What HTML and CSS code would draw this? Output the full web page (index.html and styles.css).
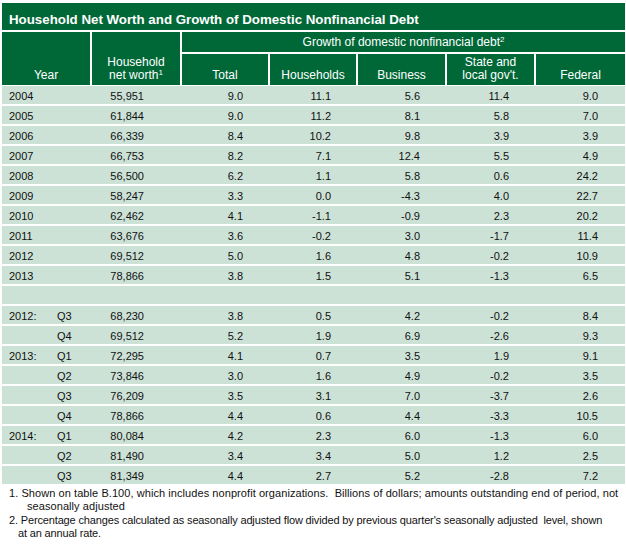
FILE: index.html
```html
<!DOCTYPE html>
<html>
<head>
<meta charset="utf-8">
<link rel="stylesheet" href="styles.css">
</head>
<body>
<div class="wrap">
  <div class="title">Household Net Worth and Growth of Domestic Nonfinancial Debt</div>
  <table class="tbl">
    <colgroup>
      <col class="c1"><col class="c2"><col class="c3"><col class="c4"><col class="c5"><col class="c6"><col class="c7">
    </colgroup>
    <thead>
      <tr class="h1">
        <th rowspan="2" class="hyear">Year</th>
        <th rowspan="2" class="hsep">Household<br>net worth<sup>1</sup></th>
        <th colspan="5" class="hsep hgrp">Growth of domestic nonfinancial debt<sup>2</sup></th>
      </tr>
      <tr class="h2">
        <th class="hsep">Total</th>
        <th class="hsep">Households</th>
        <th class="hsep">Business</th>
        <th class="hsep">State and<br>local gov't.</th>
        <th class="hsep">Federal</th>
      </tr>
    </thead>
    <tbody>
      <tr class="first"><td class="yr"><span class="y">2004</span></td><td class="nw">55,951</td><td>9.0</td><td>11.1</td><td>5.6</td><td>11.4</td><td class="fd">9.0</td></tr>
      <tr><td class="yr"><span class="y">2005</span></td><td class="nw">61,844</td><td>9.0</td><td>11.2</td><td>8.1</td><td>5.8</td><td class="fd">7.0</td></tr>
      <tr><td class="yr"><span class="y">2006</span></td><td class="nw">66,339</td><td>8.4</td><td>10.2</td><td>9.8</td><td>3.9</td><td class="fd">3.9</td></tr>
      <tr><td class="yr"><span class="y">2007</span></td><td class="nw">66,753</td><td>8.2</td><td>7.1</td><td>12.4</td><td>5.5</td><td class="fd">4.9</td></tr>
      <tr><td class="yr"><span class="y">2008</span></td><td class="nw">56,500</td><td>6.2</td><td>1.1</td><td>5.8</td><td>0.6</td><td class="fd">24.2</td></tr>
      <tr><td class="yr"><span class="y">2009</span></td><td class="nw">58,247</td><td>3.3</td><td>0.0</td><td>-4.3</td><td>4.0</td><td class="fd">22.7</td></tr>
      <tr><td class="yr"><span class="y">2010</span></td><td class="nw">62,462</td><td>4.1</td><td>-1.1</td><td>-0.9</td><td>2.3</td><td class="fd">20.2</td></tr>
      <tr><td class="yr"><span class="y">2011</span></td><td class="nw">63,676</td><td>3.6</td><td>-0.2</td><td>3.0</td><td>-1.7</td><td class="fd">11.4</td></tr>
      <tr><td class="yr"><span class="y">2012</span></td><td class="nw">69,512</td><td>5.0</td><td>1.6</td><td>4.8</td><td>-0.2</td><td class="fd">10.9</td></tr>
      <tr><td class="yr"><span class="y">2013</span></td><td class="nw">78,866</td><td>3.8</td><td>1.5</td><td>5.1</td><td>-1.3</td><td class="fd">6.5</td></tr>
      <tr class="blank"><td class="yr"></td><td class="nw"></td><td></td><td></td><td></td><td></td><td class="fd"></td></tr>
      <tr><td class="yr"><span class="y">2012:</span>Q3</td><td class="nw">68,230</td><td>3.8</td><td>0.5</td><td>4.2</td><td>-0.2</td><td class="fd">8.4</td></tr>
      <tr><td class="yr"><span class="y"></span>Q4</td><td class="nw">69,512</td><td>5.2</td><td>1.9</td><td>6.9</td><td>-2.6</td><td class="fd">9.3</td></tr>
      <tr><td class="yr"><span class="y">2013:</span>Q1</td><td class="nw">72,295</td><td>4.1</td><td>0.7</td><td>3.5</td><td>1.9</td><td class="fd">9.1</td></tr>
      <tr><td class="yr"><span class="y"></span>Q2</td><td class="nw">73,846</td><td>3.0</td><td>1.6</td><td>4.9</td><td>-0.2</td><td class="fd">3.5</td></tr>
      <tr><td class="yr"><span class="y"></span>Q3</td><td class="nw">76,209</td><td>3.5</td><td>3.1</td><td>7.0</td><td>-3.7</td><td class="fd">2.6</td></tr>
      <tr><td class="yr"><span class="y"></span>Q4</td><td class="nw">78,866</td><td>4.4</td><td>0.6</td><td>4.4</td><td>-3.3</td><td class="fd">10.5</td></tr>
      <tr><td class="yr"><span class="y">2014:</span>Q1</td><td class="nw">80,084</td><td>4.2</td><td>2.3</td><td>6.0</td><td>-1.3</td><td class="fd">6.0</td></tr>
      <tr><td class="yr"><span class="y"></span>Q2</td><td class="nw">81,490</td><td>3.4</td><td>3.4</td><td>5.0</td><td>1.2</td><td class="fd">2.5</td></tr>
      <tr><td class="yr"><span class="y"></span>Q3</td><td class="nw">81,349</td><td>4.4</td><td>2.7</td><td>5.2</td><td>-2.8</td><td class="fd">7.2</td></tr>
    </tbody>
  </table>
  <div class="notes">
    <p class="fn fn1">1. Shown on table B.100, which includes nonprofit organizations.&nbsp; Billions of dollars; amounts outstanding end of period, not<br>seasonally adjusted</p>
    <p class="fn fn2">2. Percentage changes calculated as seasonally adjusted flow divided by previous quarter's seasonally adjusted&nbsp; level, shown<br>at an annual rate.</p>
  </div>
</div>
</body>
</html>
```
FILE: styles.css
```css
html, body {
  margin: 0;
  padding: 0;
  background: #ffffff;
}

body {
  font-family: "Liberation Sans", Arial, sans-serif;
  color: #111111;
}

.wrap {
  padding: 3px 0 0 2px;
  width: 623px;
}

.title {
  box-sizing: border-box;
  height: 27px;
  padding: 9px 0 0 7px;
  line-height: 16px;
  font-size: 13.3px;
  font-weight: bold;
  color: #ffffff;
  background: #006837;
}

.tbl {
  margin-top: 2px;
  width: 623px;
  table-layout: fixed;
  border-collapse: separate;
  border-spacing: 0;
}

.c1 { width: 88px; }
.c2 { width: 90px; }
.c3 { width: 88px; }
.c4 { width: 88px; }
.c5 { width: 89px; }
.c6 { width: 89px; }
.c7 { width: 91px; }

.tbl th {
  background: #006837;
  color: #ffffff;
  font-weight: normal;
  font-size: 12px;
  line-height: 13px;
  text-align: center;
  vertical-align: bottom;
  padding: 0 0 3px 0;
}

.tbl th.hsep {
  border-left: 2px solid #ffffff;
}

.h1 th {
  height: 20px;
}

.tbl th.hgrp {
  height: 20px;
  padding: 0;
  line-height: 20px;
  vertical-align: middle;
  border-bottom: 2px solid #ffffff;
}

.h2 th {
  height: 28px;
}

.tbl sup {
  font-size: 8px;
  line-height: 0;
  vertical-align: 4px;
}

.tbl td {
  background: #cde2d7;
  font-size: 11px;
  height: 16px;
  line-height: 16px;
  padding: 2px 25px 0 0;
  text-align: right;
  border-top: 2px solid #ffffff;
  white-space: nowrap;
}

.tbl tr.first td {
  border-top-width: 1px;
}

.tbl td.yr {
  text-align: left;
  padding-left: 7px;
  padding-right: 0;
}

.y {
  display: inline-block;
  width: 48px;
}

.tbl td.nw {
  padding-right: 36px;
}

.tbl td.fd {
  padding-right: 27px;
}

.notes {
  padding-top: 3px;
}

.fn {
  margin: 0;
  font-size: 11px;
  line-height: 13px;
  white-space: nowrap;
}

.fn1 {
  padding-left: 25px;
  text-indent: -18px;
  letter-spacing: 0.07px;
}

.fn2 {
  margin-top: 1px;
  padding-left: 16px;
  text-indent: -9px;
  letter-spacing: -0.15px;
}
```
